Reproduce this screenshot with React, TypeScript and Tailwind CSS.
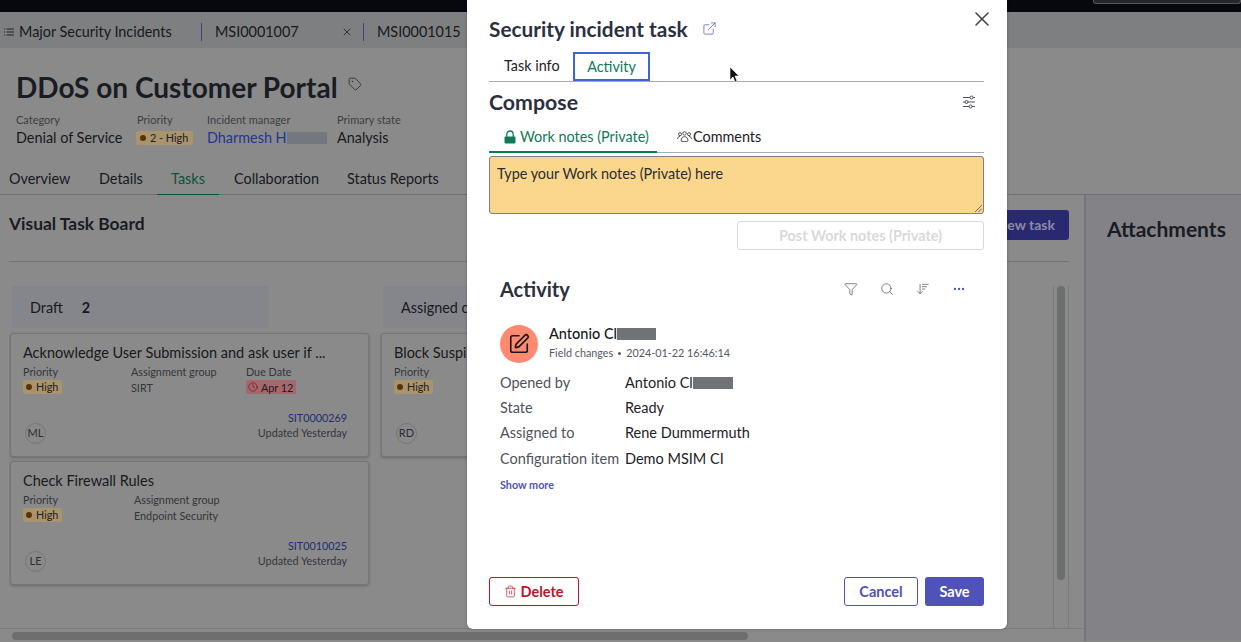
import React from "react";
import { Tag, ExternalLink, X, Filter, Search, ArrowDownWideNarrow, MoreHorizontal, SquarePen, Trash2, Clock } from "lucide-react";

function Meta({ label, children, cls }: { label: string; children: React.ReactNode; cls: string }) {
  return (
    <div className={cls}>
      <div className="text-[11px] leading-[14px] text-[#3c3e42]">{label}</div>
      <div className="mt-[1px] flex h-[20px] items-center text-[14.4px] leading-[20px] text-[#17191d]">{children}</div>
    </div>
  );
}

function High() {
  return (
    <span className="mt-[1px] flex h-[14px] w-fit items-center gap-[4px] rounded-[2px] bg-[#a8946f] pl-[3px] pr-[4px] text-[10.8px] leading-[14px] text-[#24201a]">
      <span className="h-[6px] w-[6px] rounded-full bg-[#5c3103]" />
      High
    </span>
  );
}

function Card({ title, group, groupCls, due, initials, id }: { title: string; group?: string; groupCls?: string; due?: boolean; initials: string; id?: string }) {
  return (
    <div className="relative h-[124px] w-[359px] shrink-0 rounded-[3px] border border-[#757678] bg-[#8a8a8a] pl-[12px] pr-[21px] pt-[9px] shadow-[0_1px_3px_rgba(0,0,0,0.25)]">
      <div className="truncate text-[14.5px] leading-[20px] text-[#17191d]">{title}</div>
      <div className="mt-[1px] flex h-[30px] text-[10.8px] leading-[15px] text-[#33353a]">
        <div className="w-[108px]">
          <div>Priority</div>
          <High />
        </div>
        {group && (
          <div className={groupCls}>
            <div>Assignment group</div>
            <div className="mt-[1px]">{group}</div>
          </div>
        )}
        {due && (
          <div>
            <div>Due Date</div>
            <span className="mt-[1px] flex h-[14px] w-fit items-center gap-[3px] rounded-[2px] bg-[#a5686f] px-[2px] pr-[3px] text-[#24191a]">
              <Clock size={10} strokeWidth={1.5} className="text-[#6c0a16]" />
              Apr 12
            </span>
          </div>
        )}
      </div>
      <div className="mt-[16px] flex h-[30px] items-end justify-between">
        <div className="-mb-[4px] ml-[2px] flex h-[21px] w-[21px] items-center justify-center rounded-full border border-[#747578] text-[11px] text-[#2c2e32]">{initials}</div>
        {id && (
          <div className="text-right text-[10.8px] leading-[15px] text-[#33353a]">
            <div className="text-[#1f2e6e]">{id}</div>
            <div>Updated Yesterday</div>
          </div>
        )}
      </div>
    </div>
  );
}

function Row({ label, children, cls }: { label: string; children: React.ReactNode; cls?: string }) {
  return (
    <div className={`flex items-center text-[14.5px] ${cls ?? "h-[25px]"}`}>
      <div className="w-[125px] shrink-0 text-[#4f535c]">{label}</div>
      <div className="flex items-center text-[#1e2127]">{children}</div>
    </div>
  );
}

export default function App() {
  return (
    <div className="relative h-[642px] w-[1241px] overflow-hidden bg-[#8a8a8a] font-[Lato,sans-serif]">
      <div className="flex h-[12px] justify-end bg-[#07070f]">
        <div className="h-[4px] w-[148px] rounded-b-[3px] border border-t-0 border-[#55565c] bg-[#26262e]" />
      </div>
      <div className="flex h-[36px] items-center bg-[#7d7f81] pt-[4px] text-[14.4px] text-[#17191d]">
        <div className="flex w-[201px] items-center pl-[4px]">
          <svg width="10" height="8" viewBox="0 0 10 8" className="mr-[5px]" fill="none" stroke="#25272b" strokeWidth="1">
            <path d="M0 1h1M2.5 1H10M0 4h1M2.5 4H10M0 7h1M2.5 7H10" />
          </svg>
          Major Security Incidents
        </div>
        <div className="flex h-[18px] w-[162px] items-center border-l border-[#3b4380] pl-[13px]">
          MSI0001007
          <X size={12} strokeWidth={1.5} className="ml-[42px]" />
        </div>
        <div className="flex h-[18px] items-center border-l border-[#3b4380] pl-[13px]">MSI0001015</div>
      </div>

      <div className="h-[147px] border-b border-[#6e7078]">
        <div className="flex items-center pl-[16px] pt-[21px]">
          <h1 className="text-[28px] font-bold leading-[36px] text-[#191c22]">DDoS on Customer Portal</h1>
          <Tag size={14} strokeWidth={1.5} className="ml-[10px] -mt-[6px] text-[#2c2e32]" />
        </div>
        <div className="mt-[8px] flex pl-[16px]">
          <Meta label="Category" cls="w-[121px]">Denial of Service</Meta>
          <Meta label="Priority" cls="w-[70px]">
            <span className="-ml-[1px] flex h-[14px] w-[57px] items-center gap-[4px] rounded-[2px] bg-[#a8946f] pl-[4px] text-[10.8px] leading-[14px] text-[#24201a]">
              <span className="h-[6px] w-[6px] rounded-full bg-[#5c3103]" />2 - High
            </span>
          </Meta>
          <Meta label="Incident manager" cls="w-[130px]">
            <span className="flex items-center text-[#26358f]">Dharmesh H<span className="h-[12px] w-[40px] bg-[#73777e]" /></span>
          </Meta>
          <Meta label="Primary state" cls="">Analysis</Meta>
        </div>
        <div className="mt-[17px] flex h-[29px] text-[14.4px] leading-[28px] text-[#17191d]">
          <div className="w-[99px] pl-[9px]">Overview</div>
          <div className="w-[58px]">Details</div>
          <div className="h-[30px] w-[62px] border-b border-[#0d5240] text-center text-[#0d5240]">Tasks</div>
          <div className="ml-[15px] w-[113px]">Collaboration</div>
          <div>Status Reports</div>
        </div>
      </div>

      <div className="flex h-[446px]">
        <div className="w-[1084px] shrink-0 pl-[9px] pr-[15px]">
          <div className="flex h-[67px] items-start justify-between border-b border-[#737477] pt-[15px]">
            <h2 className="pt-[2px] text-[17.4px] font-bold leading-[24px] text-[#191c22]">Visual Task Board</h2>
            <div className="h-[30px] w-[120px] rounded-[3px] bg-[#282970] pr-[14px] pt-[6px] text-right text-[14px] font-bold leading-[18px] text-[#8b8ba3]">New task</div>
          </div>
          <div className="mt-[24px] flex h-[342px] border-r border-[#7a7b7c]">
            <div className="flex h-[342px] min-w-0 flex-1 gap-[11px] overflow-hidden border-r border-[#7a7b7c]">
              <div className="w-[360px] shrink-0">
                <div className="ml-[3px] flex h-[42px] w-[257px] items-center bg-[#85858c] pl-[18px] pt-[2px] text-[14.4px] text-[#17191d]">
                  Draft<span className="ml-[19px] font-bold">2</span>
                </div>
                <div className="ml-[1px] mt-[5px] flex flex-col gap-[4px]">
                  <Card title="Acknowledge User Submission and ask user if ..." group="SIRT" groupCls="w-[115px]" due initials="ML" id="SIT0000269" />
                  <Card title="Check Firewall Rules" group="Endpoint Security" groupCls="ml-[3px]" initials="LE" id="SIT0010025" />
                </div>
              </div>
              <div className="w-[359px] shrink-0">
                <div className="ml-[3px] flex h-[42px] w-[257px] items-center bg-[#85858c] pl-[18px] pt-[2px] text-[14.4px] text-[#17191d]">Assigned c</div>
                <div className="ml-[1px] mt-[5px]">
                  <Card title="Block Suspi" initials="RD" />
                </div>
              </div>
            </div>
            <div className="flex w-[14px] justify-center">
              <div className="h-[294px] w-[8px] rounded-[4px] bg-[#6d6e6f]" />
            </div>
          </div>
        </div>
        <div className="flex-1 border-l-2 border-[#74757c] bg-[#838287] pl-[21px] pt-[21px]">
          <h2 className="text-[21px] font-bold leading-[26px] text-[#191c22]">Attachments</h2>
        </div>
      </div>

      <div className="absolute bottom-0 left-0 h-[14px] w-[1084px] border-t border-[#7a7b7c] pl-[12px] pt-[3px]">
        <div className="h-[8px] w-[736px] rounded-[4px] bg-[#6d6e6f]" />
      </div>

      {/* modal */}
      <div className="absolute left-[467px] top-0 flex h-[629px] w-[540px] flex-col rounded-b-[6px] bg-white pl-[22px] pr-[23px] shadow-[0_0_3px_rgba(0,0,0,0.3)]">
        <button className="absolute right-[13px] top-[7px] text-[#3d4148]"><X size={24} strokeWidth={1.5} /></button>
        <div className="flex h-[52px] items-center pt-[5px]">
          <h2 className="text-[20.8px] font-bold leading-[28px] text-[#2b3040]">Security incident task</h2>
          <ExternalLink size={15} strokeWidth={1.25} className="ml-[14px] text-[#5b62cc]" />
        </div>
        <div className="flex h-[30px] border-b border-[#a9acb5] text-[14.4px]">
          <div className="w-[84px] pl-[15px] pt-[4px] leading-[20px] text-[#1e2127]">Task info</div>
          <div className="h-[29px] w-[77px] border-2 border-[#3f63d8] pt-[3px] text-center leading-[20px] text-[#0f7a58]">Activity</div>
        </div>
        <div className="flex h-[43px] items-center justify-between pb-[4px] pr-[8px]">
          <h3 className="text-[21.3px] font-bold leading-[28px] text-[#2b3040]">Compose</h3>
          <svg width="14" height="14" viewBox="0 0 14 14" fill="none" stroke="#3a3e48" strokeWidth="0.9">
            <path d="M1 2.5h7M11 2.5h2M1 7h2M6 7h7M1 11.5h6M10 11.5h3" />
            <circle cx="9.5" cy="2.5" r="1.5" />
            <circle cx="4.5" cy="7" r="1.5" />
            <circle cx="8.5" cy="11.5" r="1.5" />
          </svg>
        </div>
        <div className="flex h-[28px] border-b border-[#a9acb5] text-[14.4px] leading-[26px]">
          <div className="flex h-[28px] w-[168px] items-center border-b-2 border-[#0f7a58] pb-[2px] pl-[15px] text-[#0f7a58]">
            <svg width="12" height="14" viewBox="0 0 12 14" className="mr-[4px]" fill="none">
              <path d="M2.8 7V4.2a3.2 3.2 0 0 1 6.4 0V7" stroke="#0f7a58" strokeWidth="1.3" />
              <rect x="0.5" y="6.5" width="11" height="7" rx="1" fill="#0f7a58" />
            </svg>
            Work notes (Private)
          </div>
          <div className="flex items-center pb-[4px] pl-[20px] text-[#1e2127]">
            <svg width="15" height="11" viewBox="0 0 15 11" className="mr-[1px]" fill="none" stroke="#2a2c30" strokeWidth="0.8">
              <circle cx="3" cy="3.2" r="1.5" />
              <circle cx="7.5" cy="2.4" r="1.7" />
              <circle cx="12" cy="3.2" r="1.5" />
              <path d="M0.6 8c0-1.6 1-2.6 2.4-2.6M14.4 8c0-1.6-1-2.6-2.4-2.6M4 10c0-2.6 1.4-4.4 3.5-4.4S11 7.4 11 10c-2 .8-5 .8-7 0z" />
            </svg>
            Comments
          </div>
        </div>
        <div className="relative mt-[3px] h-[58px] rounded-[3px] border border-[#7b7f86] bg-[#fbd78d] px-[7px] pt-[7px] text-[14.4px] leading-[20px] text-[#2a2c30]">
          Type your Work notes (Private) here
          <svg width="7" height="7" viewBox="0 0 7 7" className="absolute bottom-[1px] right-[1px]" stroke="#555" strokeWidth="0.8"><path d="M0 7L7 0M3.5 7L7 3.5" /></svg>
        </div>
        <div className="mt-[7px] flex justify-end">
          <div className="flex h-[29px] w-[247px] items-center justify-center rounded-[3px] border border-[#d9dade] text-[14.4px] font-bold text-[#d8d9dc]">Post Work notes (Private)</div>
        </div>

        <div className="pl-[11px]">
          <div className="mt-[25px] flex h-[28px] items-center justify-between pr-[18px]">
            <h3 className="text-[20px] font-bold leading-[28px] text-[#2b3040]">Activity</h3>
            <div className="flex items-center gap-[22px] text-[#50545c]">
              <Filter size={14} strokeWidth={1.25} />
              <Search size={14} strokeWidth={1.25} />
              <ArrowDownWideNarrow size={14} strokeWidth={1.25} />
              <MoreHorizontal size={14} strokeWidth={2} className="text-[#4d52b8]" />
            </div>
          </div>
          <div className="mt-[22px] flex h-[38px]">
            <div className="flex h-[38px] w-[38px] items-center justify-center rounded-full bg-[#ff8a70]">
              <SquarePen size={22} strokeWidth={1.75} className="text-[#16181d]" />
            </div>
            <div className="ml-[11px]">
              <div className="flex h-[18px] items-center text-[14.5px] font-medium text-[#16181d]">Antonio Cl<span className="h-[12px] w-[39px] bg-[#6f7378]" /></div>
              <div className="mt-[2px] flex items-center text-[10.8px] leading-[16px] text-[#555962]">
                Field changes<span className="mx-[5px] h-[3px] w-[3px] rounded-full bg-[#555962]" />2024-01-22 16:46:14
              </div>
            </div>
          </div>
          <div className="mt-[7px]">
            <Row label="Opened by">Antonio Cl<span className="h-[12px] w-[40px] bg-[#6f7378]" /></Row>
            <Row label="State">Ready</Row>
            <Row label="Assigned to" cls="h-[26px]">Rene Dummermuth</Row>
            <Row label="Configuration item">Demo MSIM CI</Row>
          </div>
          <div className="mt-[6px] text-[10.8px] font-bold leading-[16px] text-[#4f52b8]">Show more</div>
        </div>

        <div className="mt-auto mb-[23px] flex items-center justify-between">
          <div className="flex h-[29px] w-[90px] items-center justify-center gap-[3px] rounded-[3px] border border-[#c0132c] text-[14.5px] font-bold text-[#c0132c]">
            <Trash2 size={13} strokeWidth={1.25} />Delete
          </div>
          <div className="flex gap-[7px]">
            <div className="flex h-[29px] w-[74px] items-center justify-center rounded-[3px] border border-[#4f52b8] text-[14.5px] font-bold text-[#4f52b8]">Cancel</div>
            <div className="flex h-[29px] w-[59px] items-center justify-center rounded-[3px] bg-[#4f52b8] text-[14.5px] font-bold text-white">Save</div>
          </div>
        </div>
      </div>

      <svg width="12" height="18" viewBox="0 0 12 18" className="absolute left-[729px] top-[66px]">
        <path d="M1 1v13l3-3 2 5 2-1-2-5h4z" fill="#111" stroke="#fff" strokeWidth="0.6" />
      </svg>
    </div>
  );
}
